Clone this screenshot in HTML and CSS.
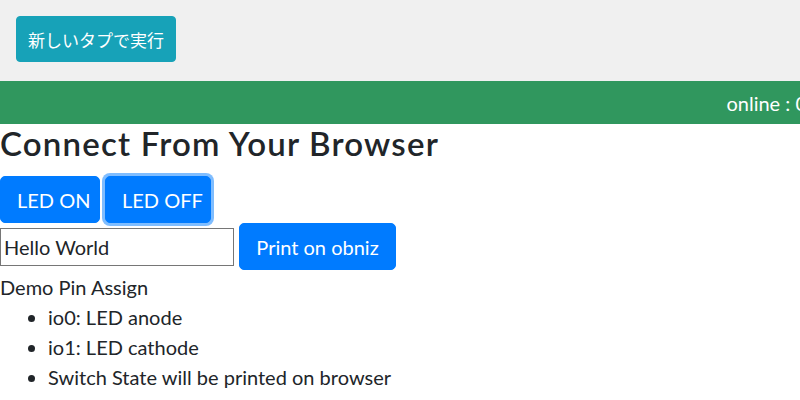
FILE: index.html
```html
<!DOCTYPE html>
<html lang="ja">
    <head>
        <meta charset="UTF-8">
        <title>obniz</title>
        <link rel="stylesheet" href="styles.css">
    </head>
    <body>
        <div class="toolbar">
            <button class="btn btn-info">新しいタプで実行</button>
        </div>
        <div class="status">
            <span class="online">online : 0</span>
        </div>
        <div class="content">
            <h2>Connect From Your Browser</h2>
            <div class="led-group">
                <button class="btn btn-primary btn-lg">LED ON</button>
                <button class="btn btn-primary btn-lg focus">LED OFF</button>
            </div>
            <div class="print-row">
                <input type="text" id="text" value="Hello World">
                <button class="btn btn-primary btn-lg">Print on obniz</button>
            </div>
            <div class="pin-title">Demo Pin Assign</div>
            <ul>
                <li>io0: LED anode</li>
                <li>io1: LED cathode</li>
                <li>Switch State will be printed on browser</li>
            </ul>
        </div>
    </body>
</html>
```

FILE: styles.css
```css
html, body {
    overflow: hidden;
}
body {
    font-family: 'Segoe UI', Lato, 'Noto Sans CJK JP', sans-serif;
    font-size: 20px;
    line-height: 1.5;
    color: #212529;
    margin: 0;
    padding: 0;
    background-color: white;
}
.toolbar {
    background-color: #f0f0f0;
    height: 81px;
    box-sizing: border-box;
    padding: 16px;
}
.btn {
    font-family: inherit;
    color: white;
    border: 1px solid transparent;
    cursor: pointer;
    white-space: nowrap;
}
.btn-info {
    background-color: #17a2b8;
    border-color: #17a2b8;
    font-family: 'Noto Sans CJK JP', sans-serif;
    font-size: 17px;
    height: 46px;
    padding: 0 11px;
    border-radius: 4px;
}
.btn-primary {
    background-color: #007bff;
    border-color: #007bff;
}
.btn-lg {
    font-size: 20px;
    line-height: 1.5;
    height: 47px;
    padding: 0 16px;
    border-radius: 5px;
}
.focus {
    box-shadow: 0 0 0 3px rgba(0, 123, 255, 0.5);
}
.status {
    background-color: #30975e;
    color: white;
    height: 43px;
    display: flex;
    align-items: center;
    justify-content: flex-end;
    overflow: hidden;
}
.online {
    white-space: nowrap;
    margin-right: -7px;
}
.content h2 {
    font-size: 33px;
    font-weight: 600;
    letter-spacing: 1.2px;
    line-height: 38px;
    margin: 0 0 14px;
}
.led-group {
    display: flex;
    gap: 5px;
}
.led-group .btn:first-child {
    width: 100px;
}
.led-group .btn:last-child {
    width: 106px;
}
.print-row {
    display: flex;
    align-items: center;
    gap: 5px;
    margin-bottom: 1px;
}
.print-row .btn {
    width: 157px;
}
input[type=text] {
    font-family: inherit;
    font-size: 20px;
    width: 234px;
    height: 38px;
    box-sizing: border-box;
    border: 1px solid #767676;
    padding: 0 3px;
    color: #212529;
}
.pin-title {
    padding-top: 1px;
}
ul {
    margin: 0;
    padding-left: 48px;
}
```
